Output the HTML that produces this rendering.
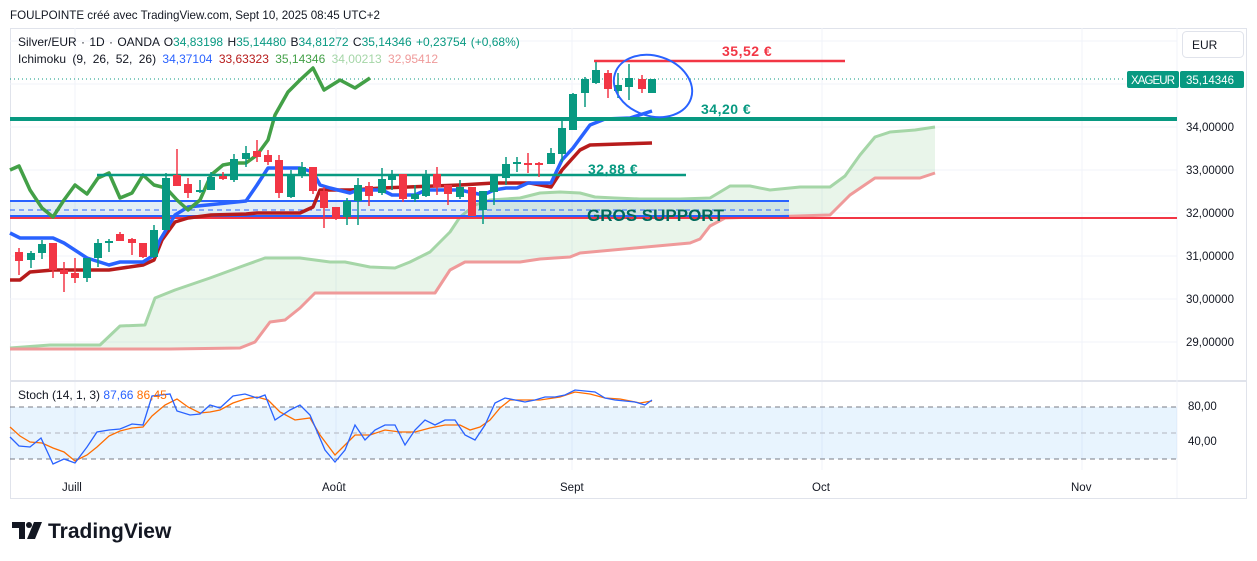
<!DOCTYPE html>
<html><head><meta charset="utf-8"><style>
body{margin:0;width:1257px;height:561px;background:#fff;overflow:hidden;font-family:"Liberation Sans",sans-serif;}
svg{position:absolute;left:0;top:0}
</style></head><body>
<svg id="s" width="1257" height="561" viewBox="0 0 1257 561" xmlns="http://www.w3.org/2000/svg" font-family="Liberation Sans, sans-serif">
<text x="10" y="19" font-size="11.6" fill="#131722">FOULPOINTE créé avec TradingView.com, Sept 10, 2025 08:45 UTC+2</text>
<rect x="10.5" y="28.5" width="1236" height="470" fill="#fff" stroke="#e0e3eb"/>
<g stroke="#f0f3fa" stroke-width="1">
<line x1="10" y1="41" x2="1177" y2="41"/><line x1="10" y1="84" x2="1177" y2="84"/><line x1="10" y1="127" x2="1177" y2="127"/><line x1="10" y1="170" x2="1177" y2="170"/><line x1="10" y1="213" x2="1177" y2="213"/><line x1="10" y1="256" x2="1177" y2="256"/><line x1="10" y1="299" x2="1177" y2="299"/><line x1="10" y1="342" x2="1177" y2="342"/>
<line x1="75" y1="28" x2="75" y2="470"/><line x1="336" y1="28" x2="336" y2="470"/><line x1="572" y1="28" x2="572" y2="470"/><line x1="822" y1="28" x2="822" y2="470"/><line x1="1082" y1="28" x2="1082" y2="470"/>
</g>
<line x1="10" y1="381" x2="1246" y2="381" stroke="#e0e3eb" stroke-width="2"/>
<line x1="1177" y1="28" x2="1177" y2="498" stroke="#f0f3fa"/>
<g id="cloud"></g>
<rect x="10" y="201" width="779" height="16" fill="rgba(100,160,200,0.18)"/>
<line x1="10" y1="201" x2="789" y2="201" stroke="#2962ff" stroke-width="2"/>
<line x1="10" y1="210" x2="789" y2="210" stroke="#2962ff" stroke-width="1" stroke-dasharray="5,4"/>
<line x1="10" y1="218" x2="1177" y2="218" stroke="#f23645" stroke-width="2"/>
<line x1="10" y1="216" x2="789" y2="216" stroke="#2962ff" stroke-width="2"/>
<line x1="10" y1="79" x2="1125" y2="79" stroke="#089981" stroke-width="1" stroke-dasharray="1,3"/>
<g id="lines"></g>
<line x1="10" y1="119" x2="1177" y2="119" stroke="#089981" stroke-width="4"/>
<line x1="97" y1="175" x2="686" y2="175" stroke="#089981" stroke-width="2.5"/>
<line x1="594" y1="61" x2="845" y2="61" stroke="#f23645" stroke-width="2.5"/>
<g id="candles"></g>
<ellipse cx="653" cy="86" rx="40" ry="30" transform="rotate(18 653 86)" fill="none" stroke="#2962ff" stroke-width="2"/>
<text x="722" y="56" font-size="14" font-weight="bold" fill="#f23645" letter-spacing="0.5">35,52 €</text>
<text x="701" y="114" font-size="14" font-weight="bold" fill="#089981" letter-spacing="0.5">34,20 €</text>
<text x="588" y="174" font-size="14" font-weight="bold" fill="#089981" letter-spacing="0.5">32,88 €</text>
<text x="587" y="221" font-size="17" font-weight="bold" fill="#00695c">GROS SUPPORT</text>
<text x="18" y="46" font-size="12" fill="#131722" word-spacing="1">Silver/EUR · 1D · OANDA <tspan>O</tspan><tspan fill="#089981">34,83198</tspan> H<tspan fill="#089981">35,14480</tspan> B<tspan fill="#089981">34,81272</tspan> C<tspan fill="#089981">35,14346</tspan> <tspan fill="#089981">+0,23754 (+0,68%)</tspan></text>
<text x="18" y="63" font-size="12" fill="#131722" word-spacing="3">Ichimoku (9, 26, 52, 26) <tspan fill="#2962ff">34,37104</tspan> <tspan fill="#b71c1c">33,63323</tspan> <tspan fill="#43a047">35,14346</tspan> <tspan fill="#a5d6a7">34,00213</tspan> <tspan fill="#ef9a9a">32,95412</tspan></text>
<rect x="1182.5" y="31.5" width="61" height="26" rx="4" fill="#fff" stroke="#e0e3eb"/>
<text x="1192" y="49" font-size="12" fill="#131722">EUR</text>
<rect x="1127" y="71" width="52" height="17" rx="2" fill="#089981"/>
<rect x="1180" y="71" width="64" height="17" rx="2" fill="#089981"/>
<text x="1131" y="84" font-size="11.5" fill="#fff" textLength="44">XAGEUR</text>
<text x="1186" y="84" font-size="11.5" fill="#fff">35,14346</text>
<g font-size="11.5" fill="#131722">
<text x="1186" y="131">34,00000</text><text x="1186" y="174">33,00000</text><text x="1186" y="217">32,00000</text><text x="1186" y="260">31,00000</text><text x="1186" y="303">30,00000</text><text x="1186" y="346">29,00000</text>
<text x="1188" y="410">80,00</text><text x="1188" y="445">40,00</text>
<text x="62" y="491">Juill</text><text x="322" y="491">Août</text><text x="560" y="491">Sept</text><text x="812" y="491">Oct</text><text x="1071" y="491">Nov</text>
</g>
<rect x="10" y="407" width="1167" height="52" fill="rgba(33,150,243,0.1)"/>
<g stroke="#787b86" stroke-width="1" stroke-dasharray="5,4">
<line x1="10" y1="407" x2="1177" y2="407"/><line x1="10" y1="433" x2="1177" y2="433" stroke="#b2b5be"/><line x1="10" y1="459" x2="1177" y2="459"/></g>
<g id="stoch"></g>
<text x="18" y="399" font-size="12" fill="#131722">Stoch (14, 1, 3) <tspan fill="#2962ff">87,66</tspan> <tspan fill="#ff6d00">86,45</tspan></text>
<g transform="translate(12,522)" fill="#131722"><path d="M0 0h13v17h-6v-11h-7z"/><circle cx="17" cy="3" r="3"/><path d="M22 0h8l-7 17h-8z"/></g>
<text x="48" y="538" font-size="21" font-weight="bold" fill="#131722">TradingView</text>
</svg>
<script>
var NS="http://www.w3.org/2000/svg";
function el(p,t,a){var e=document.createElementNS(NS,t);for(var k in a)e.setAttribute(k,a[k]);document.getElementById(p).appendChild(e);return e;}
function pts(a){return a.map(function(p){return p.join(",")}).join(" ");}
var A=[[10,348],[50,345],[100,345],[120,326],[145,325],[155,298],[175,290],[210,278],[240,267],[265,258],[300,258],[330,262],[345,262],[370,267],[395,268],[410,262],[430,252],[450,232],[460,217],[475,205],[490,200],[520,198],[540,193],[560,192],[580,193],[595,197],[615,198],[640,199],[680,199],[710,198],[730,186],[750,186],[770,190],[800,187],[830,187],[845,176],[860,155],[875,137],[890,132],[915,130],[935,127]];
var B=[[10,349],[170,349],[240,348],[255,342],[270,322],[285,320],[300,308],[315,293],[435,293],[450,270],[465,262],[520,262],[540,259],[570,257],[580,253],[690,243],[700,239],[710,226],[725,218],[830,215],[850,195],[875,178],[920,178],[935,173]];
el("cloud","polygon",{points:pts(A.concat(B.slice().reverse())),fill:"rgba(76,175,80,0.12)"});
el("cloud","polyline",{points:pts(A),fill:"none",stroke:"#a5d6a7","stroke-width":3,"stroke-linejoin":"round"});
el("cloud","polyline",{points:pts(B),fill:"none",stroke:"#ef9a9a","stroke-width":3,"stroke-linejoin":"round"});
var lag=[[10,170],[19,166],[30,190],[42,208],[53,217],[64,200],[75,185],[87,194],[98,178],[109,173],[120,198],[132,193],[143,175],[154,185],[166,188],[177,200],[188,210],[200,200],[211,175],[223,165],[234,163],[246,163],[257,155],[268,140],[275,115],[288,92],[300,80],[313,68],[324,90],[340,80],[355,88],[370,78]];
var ten=[[10,233],[20,238],[53,238],[64,243],[87,258],[109,265],[120,262],[143,262],[154,255],[160,240],[175,215],[188,207],[246,201],[257,185],[268,168],[300,168],[313,172],[320,185],[330,188],[350,193],[358,190],[382,190],[392,195],[415,195],[426,190],[460,190],[483,195],[494,190],[506,188],[517,188],[528,183],[551,183],[562,160],[573,148],[590,125],[605,119],[630,118],[652,111]];
var kij=[[10,280],[20,280],[30,272],[53,270],[109,270],[143,265],[154,260],[162,240],[175,222],[188,218],[211,215],[246,214],[257,213],[300,213],[313,207],[320,190],[350,190],[382,188],[460,185],[494,183],[530,183],[551,187],[562,170],[580,150],[590,145],[620,144],[652,143]];
el("lines","polyline",{points:pts(kij),fill:"none",stroke:"#b71c1c","stroke-width":3.5,"stroke-linejoin":"round"});
el("lines","polyline",{points:pts(ten),fill:"none",stroke:"#2962ff","stroke-width":3.5,"stroke-linejoin":"round"});
el("lines","polyline",{points:pts(lag),fill:"none",stroke:"#43a047","stroke-width":3.5,"stroke-linejoin":"round"});
var C=[[19,252,261,248,275,0],[31,253,260,251,268,1],[42,244,253,240,259,1],[53,243,270,243,278,0],[64,270,274,262,292,0],[75,273,278,258,283,0],[87,258,278,258,282,1],[98,243,258,239,267,1],[109,241,243,239,252,1],[120,234,241,232,241,0],[132,239,243,238,255,0],[143,243,257,243,258,0],[154,230,257,225,258,1],[166,178,230,173,230,1],[177,175,186,149,186,0],[188,184,193,178,198,0],[200,190,192,180,193,1],[211,177,190,172,190,1],[223,176,179,172,180,0],[234,159,180,154,182,1],[246,153,159,146,167,1],[257,151,157,140,162,0],[268,155,162,150,165,0],[279,160,193,155,198,0],[291,176,197,170,198,1],[302,167,176,162,178,1],[313,167,191,167,194,0],[324,191,208,187,228,0],[336,207,217,207,220,0],[347,201,217,198,225,1],[358,185,201,178,225,1],[369,186,196,182,206,0],[382,179,193,168,195,1],[392,175,180,170,190,1],[403,174,199,174,202,0],[415,194,199,185,202,1],[426,175,196,170,197,1],[437,174,187,167,195,0],[448,185,194,185,205,0],[460,187,197,180,199,1],[472,187,216,187,216,0],[483,191,210,191,224,1],[494,176,192,176,205,1],[506,164,178,157,185,1],[517,162,164,157,172,1],[528,163,165,153,173,0],[539,163,165,162,177,0],[551,153,164,148,164,1],[562,128,154,120,162,1],[573,94,130,93,130,1],[585,79,93,77,107,1],[596,70,83,62,84,1],[608,73,89,70,98,0],[618,85,91,73,98,1],[629,78,87,64,100,1],[642,79,89,75,93,0],[652,79,93,79,93,1]];
C.forEach(function(c){var col=c[5]?"#089981":"#f23645";
el("candles","line",{x1:c[0],x2:c[0],y1:c[3],y2:c[4],stroke:col,"stroke-width":1.5});
el("candles","rect",{x:c[0]-4,y:c[1],width:8,height:Math.max(1.5,c[2]-c[1]),fill:col});});
var K=[[10,437],[19,446],[30,447],[41,438],[53,464],[64,459],[75,463],[87,447],[97,432],[109,430],[120,429],[132,424],[143,425],[152,396],[170,394],[177,411],[190,415],[200,414],[210,405],[220,408],[233,396],[245,394],[257,398],[265,395],[275,420],[290,410],[300,405],[310,415],[325,450],[335,462],[345,450],[355,425],[365,440],[375,430],[385,425],[395,425],[405,445],[415,430],[425,420],[435,425],[445,420],[455,420],[465,435],[475,440],[485,425],[495,403],[505,398],[515,400],[525,402],[535,400],[545,397],[555,397],[565,395],[575,390],[585,391],[595,392],[605,398],[615,400],[625,401],[635,402],[645,405],[652,400]];
var D=[[10,427],[20,436],[30,442],[42,443],[53,448],[64,452],[75,461],[87,455],[97,447],[109,436],[120,431],[132,428],[143,427],[152,416],[165,405],[177,399],[188,407],[200,413],[210,412],[220,410],[233,403],[245,399],[257,397],[268,400],[280,412],[295,420],[310,418],[320,435],[335,455],[345,445],[355,435],[370,435],[385,430],[400,432],[415,432],[430,428],[445,425],[460,425],[470,430],[480,427],[490,420],[500,408],[510,400],[520,400],[540,400],[560,397],[575,392],[590,394],[605,398],[620,399],[640,403],[652,401]];
el("stoch","polyline",{points:pts(D),fill:"none",stroke:"#ff6d00","stroke-width":1.3});
el("stoch","polyline",{points:pts(K),fill:"none",stroke:"#2962ff","stroke-width":1.3});
</script>
</body></html>
